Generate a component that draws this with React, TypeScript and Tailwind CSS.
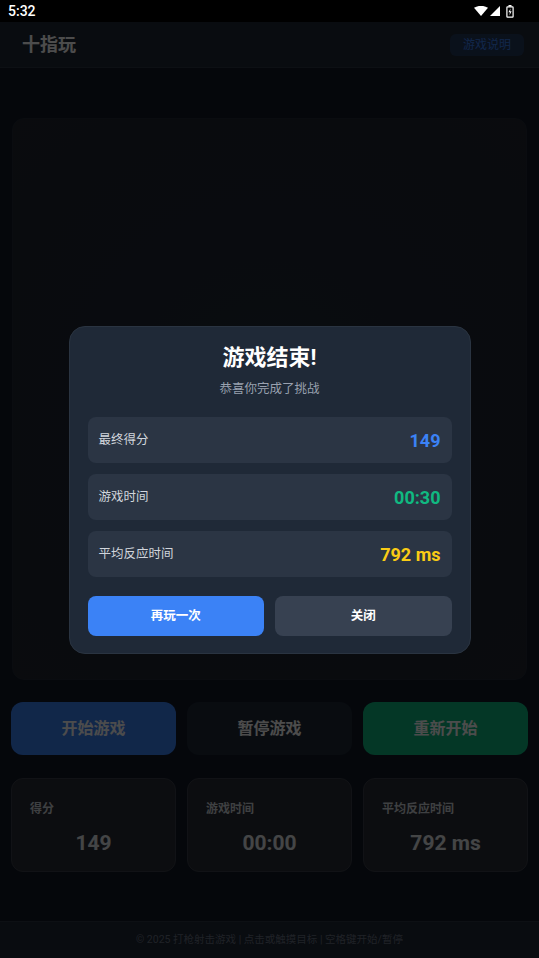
import React from 'react'

const font = { fontFamily: "Roboto, 'Noto Sans CJK SC', sans-serif" }

function StatusBar() {
    return (
        <div className="h-[22px] bg-black flex items-center justify-between pl-[8px] pr-[25px] text-white">
            <span className="text-[14px] font-medium leading-none">5:32</span>
            <div className="flex items-center">
                <svg width="14" height="10" viewBox="0 0 14 10">
                    <path d="M0 1.8 Q7 -2.2 14 1.8 L7 10 Z" fill="#fff" />
                </svg>
                <svg width="10" height="10" viewBox="0 0 10 10" className="ml-[2px]">
                    <path d="M10 0 L10 10 L0 10 Z" fill="#fff" />
                </svg>
                <svg width="8" height="13" viewBox="0 0 8 13" className="ml-[6px]">
                    <rect x="2.5" y="0" width="3" height="1.5" fill="#fff" />
                    <rect x="0.9" y="1.9" width="6.2" height="10.2" rx="0.6" fill="none" stroke="#fff" strokeWidth="1.2" />
                    <path d="M4.6 3.2 L2.5 7.3 H3.9 L3.4 10.6 L5.6 6.2 H4.1 Z" fill="#fff" />
                </svg>
            </div>
        </div>
    )
}

function StatRow({ label, value, color }: { label: string; value: string; color: string }) {
    return (
        <div className="h-[46px] rounded-lg bg-[#2b3544] flex items-center justify-between px-[11px]">
            <span className="text-[12.5px] text-gray-300">{label}</span>
            <span className={`text-[18px] font-bold ${color}`}>{value}</span>
        </div>
    )
}

export default function App() {
    return (
        <div className="relative w-[539px] h-[958px] overflow-hidden bg-[#111827]" style={font}>
            <StatusBar />

            {/* header */}
            <div className="h-[46px] bg-[#1f2937] border-b border-[#2c3644] flex items-center justify-between pl-[22px] pr-[15px]">
                <h1 className="text-[18px] font-bold text-white">十指玩</h1>
                <button className="h-[22px] px-[13px] rounded-md bg-[#3b82f6]/20 text-[#3b82f6] text-[12px] leading-none">游戏说明</button>
            </div>

            {/* game area */}
            <div className="px-3 pt-[50px]">
                <div className="h-[562px] rounded-xl border border-[#222a36] bg-[radial-gradient(circle_at_center,#202a38_0%,#1f2632_50%,#222630_100%)]" />
            </div>

            {/* controls */}
            <div className="grid grid-cols-3 gap-[11px] px-[11px] mt-[22px]">
                <button className="h-[53px] rounded-xl bg-[#3b82f6] text-white font-bold text-[16px]">开始游戏</button>
                <button className="h-[53px] rounded-xl bg-[#1f2937] text-white font-bold text-[16px]">暂停游戏</button>
                <button className="h-[53px] rounded-xl bg-[#10b981] text-white font-bold text-[16px]">重新开始</button>
            </div>

            <div className="grid grid-cols-3 gap-[11px] px-[11px] mt-[23px]">
                {[
                    ['得分', '149'],
                    ['游戏时间', '00:00'],
                    ['平均反应时间', '792 ms'],
                ].map(([l, v]) => (
                    <div key={l} className="h-[94px] rounded-xl bg-[#2a2d36] border border-[#3b3f4a] px-[18px] pt-[21px]">
                        <div className="text-[12px] font-semibold text-gray-300 leading-[18px]">{l}</div>
                        <div className="text-[21px] font-bold text-gray-200 text-center mt-[11px] leading-[28px]">{v}</div>
                    </div>
                ))}
            </div>

            {/* footer */}
            <div className="absolute left-0 right-0 bottom-0 h-[37px] bg-[#1f2937] border-t border-[#2c3644] flex items-center justify-center">
                <span className="text-[10.5px] text-gray-500">© 2025 打枪射击游戏 | 点击或触摸目标 | 空格键开始/暂停</span>
            </div>

            {/* game over overlay */}
            <div className="absolute left-0 right-0 bottom-0 top-[22px] bg-black/70 flex items-center justify-center">
                <div className="w-[402px] rounded-2xl bg-[#1f2937] border border-[#2a3441] px-[18px] pt-[17px] pb-[17px]">
                    <h2 className="text-[22px] font-bold text-white text-center leading-[28px]">游戏结束!</h2>
                    <p className="text-[12.5px] text-gray-400 text-center mt-[8px] leading-[18px]">恭喜你完成了挑战</p>
                    <div className="mt-[19px] flex flex-col gap-[11px]">
                        <StatRow label="最终得分" value="149" color="text-[#3b82f6]" />
                        <StatRow label="游戏时间" value="00:30" color="text-[#10b981]" />
                        <StatRow label="平均反应时间" value="792 ms" color="text-[#facc15]" />
                    </div>
                    <div className="mt-[19px] grid grid-cols-2 gap-[11px]">
                        <button className="h-10 rounded-lg bg-[#3b82f6] text-white font-bold text-[12.5px]">再玩一次</button>
                        <button className="h-10 rounded-lg bg-[#374151] text-white font-bold text-[12.5px]">关闭</button>
                    </div>
                </div>
            </div>
        </div>
    )
}
